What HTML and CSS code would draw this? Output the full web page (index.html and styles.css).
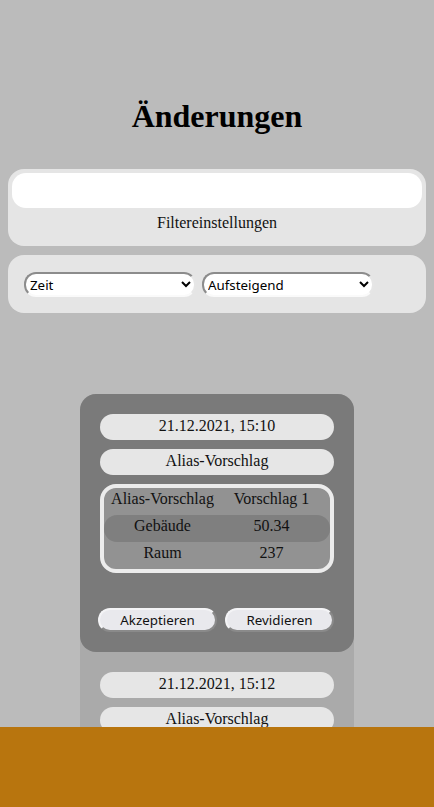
FILE: index.html
```html
<!DOCTYPE html>
<html lang="de">
<head>
<meta charset="utf-8">
<title>Änderungen</title>
<link rel="stylesheet" href="styles.css">
</head>
<body>
<main class="page">
  <h1 class="title">Änderungen</h1>

  <section class="panel panel-search">
    <input class="search" type="text" aria-label="Suche">
    <div class="panel-label">Filtereinstellungen</div>
  </section>

  <section class="panel panel-sort">
    <select class="sel">
      <option>Zeit</option>
    </select>
    <select class="sel">
      <option>Aufsteigend</option>
    </select>
  </section>

  <section class="list">
    <article class="card card-active">
      <div class="pill">21.12.2021, 15:10</div>
      <div class="pill">Alias-Vorschlag</div>
      <div class="tbl">
        <div class="row"><span>Alias-Vorschlag</span><span>Vorschlag 1</span></div>
        <div class="row row-hl"><span>Gebäude</span><span>50.34</span></div>
        <div class="row"><span>Raum</span><span>237</span></div>
      </div>
      <div class="actions">
        <button class="btn btn-accept">Akzeptieren</button>
        <button class="btn btn-revert">Revidieren</button>
      </div>
    </article>
    <article class="card">
      <div class="pill">21.12.2021, 15:12</div>
      <div class="pill">Alias-Vorschlag</div>
    </article>
  </section>
</main>
<footer class="footer"></footer>
</body>
</html>
```

FILE: styles.css
```css
html, body {
  margin: 0;
  padding: 0;
  background: #bbbbbb;
}
body {
  font-family: "Liberation Serif", "Times New Roman", serif;
  color: #111;
  height: 807px;
  overflow: hidden;
}
.page {
  padding-top: 98px;
}
.title {
  margin: 0;
  font-size: 32px;
  line-height: 37px;
  font-weight: bold;
  text-align: center;
  color: #000;
}
.panel {
  margin: 0 8px;
  background: #e5e5e5;
  border-radius: 16px;
}
.panel-search {
  margin-top: 34px;
  padding: 4px 4px 14px;
}
.search {
  display: block;
  box-sizing: border-box;
  width: 100%;
  height: 35px;
  border: none;
  border-radius: 14px;
  background: #fff;
  outline: none;
}
.panel-label {
  margin-top: 6px;
  text-align: center;
  font-size: 16px;
  line-height: 18px;
  color: #111;
}
.panel-sort {
  margin-top: 9px;
  padding: 17px 16px 16px;
  display: flex;
  gap: 6px;
}
.sel {
  box-sizing: border-box;
  width: 172px;
  height: 25px;
  background: #fff;
  border: 2px solid;
  border-color: #8c8c8c #e6e6e6 #fafafa #8c8c8c;
  border-radius: 12px;
  font-family: "Noto Sans", "DejaVu Sans", sans-serif;
  font-size: 13.33px;
  color: #000;
  padding: 0;
}
.list {
  width: 274px;
  margin: 81px auto 0;
  background: #aaaaaa;
  border-radius: 16px 16px 0 0;
}
.card {
  padding: 20px;
  border-radius: 16px;
  display: flex;
  flex-direction: column;
  gap: 9px;
}
.card-active {
  background: #7a7a7a;
}
.pill {
  height: 26px;
  line-height: 24px;
  background: #e6e6e6;
  border-radius: 13px;
  text-align: center;
  font-size: 16px;
  color: #111;
}
.tbl {
  border: 4px solid #ececec;
  border-radius: 16px;
  background: #929292;
}
.row {
  display: grid;
  grid-template-columns: 1fr 1fr;
  height: 27px;
  line-height: 22px;
  font-size: 16px;
  text-align: center;
  color: #111;
}
.row span {
  padding: 0 4px;
}
.row span:first-child {
  padding: 0 0 0 4px;
}
.row span:last-child {
  padding: 0 4px 0 0;
}
.row-hl {
  background: #7f7f7f;
  border-radius: 13px;
}
.actions {
  display: flex;
  gap: 8px;
  margin: 26px 0 0 -2px;
}
.btn {
  box-sizing: border-box;
  height: 24px;
  background: #e9e9ed;
  border: 2px solid;
  border-color: #f4f4f6 #8a8a8a #8a8a8a #f4f4f6;
  border-radius: 12px;
  font-family: "Noto Sans", "DejaVu Sans", sans-serif;
  font-size: 13.33px;
  color: #111;
  padding: 0;
}
.btn-accept { width: 119px; }
.btn-revert { width: 109px; }
.footer {
  position: fixed;
  left: 0;
  right: 0;
  bottom: 0;
  height: 80px;
  background: #b8750e;
}
```
